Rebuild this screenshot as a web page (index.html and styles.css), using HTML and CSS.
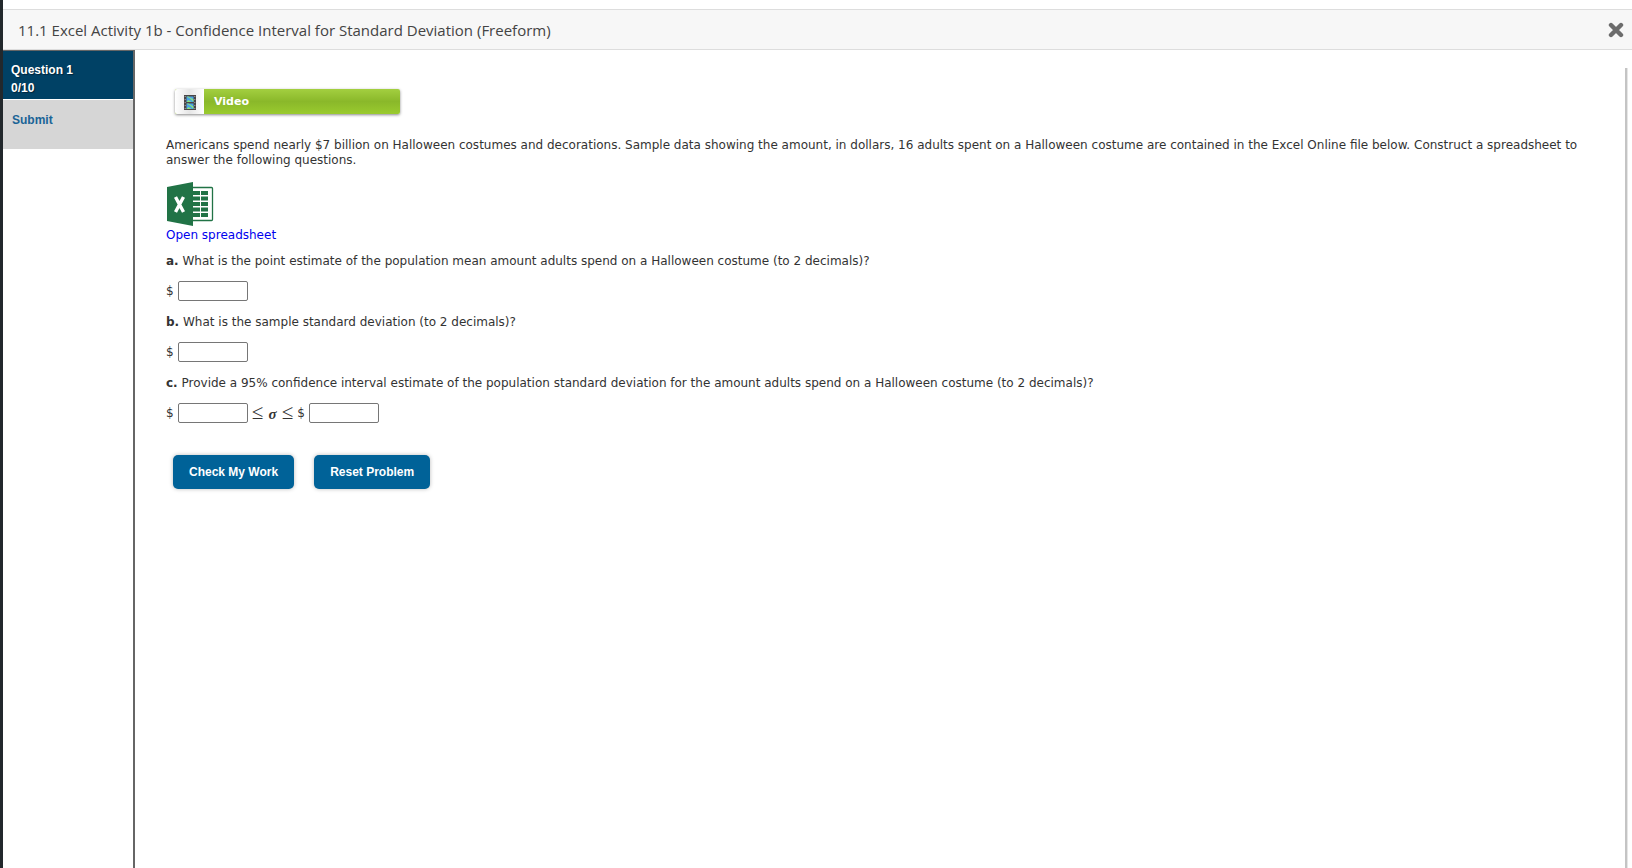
FILE: index.html
```
<!DOCTYPE html>
<html lang="en">

<head>
    <meta charset="utf-8" />
    <title>11.1 Excel Activity 1b</title>
    <link rel="stylesheet" href="styles.css">
</head>

<body>
    <div class="page">
        <header class="header">
            <h1>11.1 Excel Activity 1b - Confidence Interval for Standard Deviation (Freeform)</h1>
            <button class="close" type="button" aria-label="Close">
                <svg width="16" height="16" viewBox="0 0 16 16">
                    <path d="M3 3l10 10M13 3l-10 10" stroke="#6c6c6c" stroke-width="4.4" stroke-linecap="round" />
                </svg>
            </button>
        </header>
        <div class="wrap">
            <nav class="side">
                <a class="item active" href="#">Question 1<br>0/10</a>
                <a class="item submit" href="#">Submit</a>
            </nav>
            <main class="main">
                <button class="video" type="button">
                    <span class="film">
                        <svg width="12" height="15" viewBox="0 0 12 15">
                            <rect width="12" height="15" fill="#4a4648" />
                            <rect x="2.5" y="1.5" width="7" height="5.5" fill="#4aa3e6" />
                            <path d="M2.5 1.5h2l5 3V7L6 3.500zM2.500 7l2-2 3 2z" fill="#8be07a" />
                            <rect x="2.5" y="8.5" width="7" height="5.5" fill="#4aa3e6" />
                            <path d="M2.5 8.5h2l5 3V14L6 10.500zM2.500 14l2-2 3 2z" fill="#8be07a" />
                            <path d="M1.2 1v14M10.8 1v14" stroke="#aaa" stroke-dasharray="1 2" />
                        </svg>
                    </span>
                    <span class="video-text">Video</span>
                </button>

                <p class="intro">Americans spend nearly $7 billion on Halloween costumes and decorations. Sample data showing the amount, in dollars, 16 adults spent on a Halloween costume are contained in the Excel Online file below. Construct a spreadsheet to answer the following questions.</p>

                <a class="sheet" href="#">
                    <svg width="48" height="44" viewBox="0 0 48 44">
                        <rect x="26" y="5.5" width="20.5" height="33" rx="1" fill="#fff" stroke="#217346" stroke-width="1.3" />
                        <path d="M27 9h7v4h-7zM35 9h7v4h-7zM27 14.500h7v4h-7zM35 14.500h7v4h-7zM27 20h7v4h-7zM35 20h7v4h-7zM27 25.500h7v4h-7zM35 25.500h7v4h-7zM27 31h7v4h-7zM35 31h7v4h-7z" fill="#217346" />
                        <path d="M1 5L27 0v44L1 39z" fill="#217346" />
                        <path d="M9.5 15l8 15M17.5 15l-8 15" stroke="#fff" stroke-width="3.4" />
                    </svg>
                    <span>Open spreadsheet</span>
                </a>

                <form class="questions">
                    <label for="mean"><b>a.</b> What is the point estimate of the population mean amount adults spend on a Halloween costume (to 2 decimals)?</label>
                    <div class="answer">$ <input type="text" id="mean"></div>
                    <label for="sd"><b>b.</b> What is the sample standard deviation (to 2 decimals)?</label>
                    <div class="answer">$ <input type="text" id="sd"></div>
                    <label for="low"><b>c.</b> Provide a 95% confidence interval estimate of the population standard deviation for the amount adults spend on a Halloween costume (to 2 decimals)?</label>
                    <div class="answer">
                        $ <input type="text" id="low">
                        <span class="math">≤ <i>σ</i> ≤</span>
                        $ <input type="text" id="high" aria-label="Upper limit">
                    </div>
                    <div class="btns">
                        <button type="button">Check My Work</button>
                        <button type="reset">Reset Problem</button>
                    </div>
                </form>
            </main>
        </div>
    </div>
</body>

</html>
```
FILE: styles.css
```
* {
    box-sizing: border-box;
}

body,
h1,
p {
    margin: 0;
    padding: 0;
}

body {
    background: #fff;
    color: #333;
    font-family: Verdana, "DejaVu Sans", sans-serif;
    font-size: 12px;
    line-height: 15px;
}

a {
    text-decoration: none;
}

.page {
    display: flex;
    flex-direction: column;
    min-height: 100vh;
    padding-top: 9px;
    border-left: 3px solid #22282c;
}

.header {
    display: flex;
    align-items: center;
    justify-content: space-between;
    height: 41px;
    padding: 0 8px 0 15px;
    border-top: 1px solid #ddd;
    border-bottom: 1px solid #ddd;
    background: #f7f7f7;
}

.header h1 {
    font: 15px/20px "Open Sans", sans-serif;
    color: #444;
}

.close {
    display: flex;
    padding: 0;
    border: 0;
    background: none;
}

.wrap {
    display: flex;
    flex: 1;
}

.side {
    width: 132px;
    border-top: 1px solid #666;
    border-right: 2px solid #666;
    font: bold 12px/18px "Liberation Sans", Arial, sans-serif;
}

.item {
    display: block;
    height: 49px;
    padding: 11px 9px;
    background: #d6d6d6;
    color: #1a6496;
}

.item.active {
    padding: 10px 8px;
    border-bottom: 1px solid #fff;
    background: #004165;
    color: #fff;
    text-shadow: 1px 1px 1px #00263c;
}

.main {
    display: flex;
    flex: 1;
    flex-direction: column;
    align-items: flex-start;
    margin: 18px 5px 0 0;
    padding: 21px 40px 0 31px;
    border-right: 2px solid #c4c4c4;
    box-shadow: 1px 0 #e6e6e6;
}

.video {
    display: flex;
    width: 225px;
    height: 25px;
    margin: 0 9px;
    padding: 0;
    border: 0;
    border-radius: 2px;
    background: linear-gradient(#a3cf40, #8ab82a 50%, #9acb2e);
    box-shadow: 0 1px 3px #888;
    overflow: hidden;
}

.film {
    display: flex;
    align-items: center;
    justify-content: center;
    width: 29px;
    height: 25px;
    padding-top: 2px;
    background: linear-gradient(90deg, #fff, #e6e6e6 50%, #fff);
}

.video-text {
    padding-left: 10px;
    color: #fff;
    font: bold 11px/25px Verdana, "DejaVu Sans", sans-serif;
}

.intro {
    margin-top: 24px;
}

.sheet {
    margin-top: 14px;
    color: #00e;
}

.sheet svg,
.sheet span {
    display: block;
}

.sheet span {
    margin-top: 2px;
}

.questions {
    margin-top: 11px;
}

.questions label {
    display: block;
}

.answer {
    display: flex;
    align-items: center;
    gap: 4px;
    height: 20px;
    margin: 12px 0 14px;
}

.answer input {
    width: 70px;
    height: 20px;
    border: 1px solid #767676;
    border-radius: 2px;
}

.math {
    font: 21px/20px "Liberation Serif", "Times New Roman", serif;
}

.math i {
    font-weight: bold;
    font-size: 15px;
}

.btns {
    display: flex;
    gap: 20px;
    margin: 32px 7px;
}

.btns button {
    height: 34px;
    padding: 0 16px;
    border: 0;
    border-radius: 5px;
    background: #006298;
    box-shadow: 0 0 4px #bbb;
    color: #fff;
    font: bold 12px "Liberation Sans", Arial, sans-serif;
}
```
